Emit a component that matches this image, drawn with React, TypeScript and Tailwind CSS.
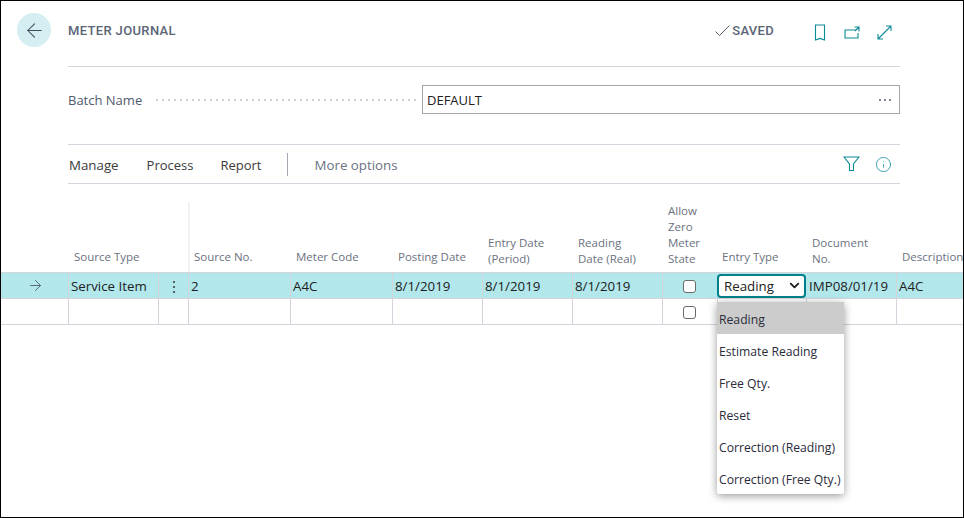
import { ArrowLeft, ArrowRight, ChevronDown, Info } from 'lucide-react';

const COLS = 'grid grid-cols-[67px_90px_30px_102px_102px_90px_90px_90px_55px_89px_90px_68px]';

const HEADERS = [
  { label: '', cls: '' },
  { label: 'Source Type', cls: 'pl-[6px] pb-[7px]' },
  { label: '', cls: '' },
  { label: 'Source No.', cls: 'pl-[4px] pb-[7px] border-l-2 border-[#f1f1f3]' },
  { label: 'Meter Code', cls: 'pl-[6px] pb-[7px]' },
  { label: 'Posting Date', cls: 'pl-[6px] pb-[7px]' },
  { label: 'Entry Date (Period)', cls: 'pl-[6px] pb-[5px] pr-[20px]' },
  { label: 'Reading Date (Real)', cls: 'pl-[6px] pb-[5px] pr-[20px]' },
  { label: 'Allow Zero Meter State', cls: 'pl-[6px] pb-[5px]' },
  { label: 'Entry Type', cls: 'pl-[5px] pb-[7px]' },
  { label: 'Document No.', cls: 'pl-[6px] pb-[5px] pr-[20px]' },
  { label: 'Description', cls: 'pl-[6px] pb-[7px] whitespace-nowrap' },
];

const OPTIONS = ['Reading', 'Estimate Reading', 'Free Qty.', 'Reset', 'Correction (Reading)', 'Correction (Free Qty.)'];

const cell = 'border-l border-[#d4d4dc] pl-[2px] pt-[2px] flex items-center overflow-hidden whitespace-nowrap';

function Checkbox() {
  return <div className="w-[13px] h-[13px] rounded-[3px] border border-[#6b6b6b] bg-white" />;
}

export default function App() {
  return (
    <div className="relative w-[964px] h-[518px] bg-white border border-black overflow-hidden text-[13.3px] text-[#212121] font-['Open_Sans','Noto_Sans',sans-serif]">
      {/* Header */}
      <div className="flex h-[66px]">
        <div className="w-[67px] pl-[16px] pt-[12px]">
          <div className="w-[34px] h-[34px] rounded-full bg-[#d5eef1] flex items-center justify-center text-[#3f4a5a]">
            <ArrowLeft size={23} strokeWidth={1.1} />
          </div>
        </div>
        <div className="w-[832px] flex items-start border-b border-[#d4d4dc]">
          <div className="pt-[20px] text-[13px] font-['Roboto',sans-serif] font-medium tracking-[0.35px] text-[#5a6576]">METER JOURNAL</div>
          <div className="ml-auto flex items-center pt-[20px]">
            <svg width="15" height="12" viewBox="0 0 15 12" fill="none" stroke="#505c6d" strokeWidth="1"><path d="M0.500 6.500l4 4L14.500 0.500" /></svg>
            <span className="ml-[2px] text-[13px] font-['Roboto',sans-serif] font-medium tracking-[0.3px] text-[#5a6576]">SAVED</span>
            <svg className="ml-[40px] mt-[3px]" width="12" height="17" viewBox="0 0 12 17" fill="none" stroke="#0a8a96" strokeWidth="1.1"><path d="M1.500 1h9v15l-4.500-1.600L1.500 16z" /></svg>
            <svg className="ml-[18px] mt-[3px]" width="16" height="13" viewBox="0 0 16 13" fill="none" stroke="#0a8a96" strokeWidth="1.1"><path d="M11.500 4H1v8h13V7M10.500 1h4.500v4.500M15 1l-4 4" /></svg>
            <svg className="ml-[17px] mr-[8px] mt-[2px]" width="15" height="15" viewBox="0 0 15 15" fill="none" stroke="#0a8a96" strokeWidth="1.1"><path d="M9 1h5v5M14 1L1 14M1 9v5h5" /></svg>
          </div>
        </div>
      </div>

      {/* Batch */}
      <div className="flex items-center ml-[67px] w-[832px] mt-[18px] h-[29px]">
        <span className="text-[#505c6d] w-[86px] pt-[3px] text-[13px]">Batch Name</span>
        <div className="w-[264px] h-[2px] mt-[1px] bg-[radial-gradient(circle,#d0d0d0_1px,transparent_1px)] bg-[length:6px_2px]" />
        <div className="ml-[4px] flex-1 h-[29px] border border-[#a6a6a6] flex items-center justify-between pl-[4px] pr-[8px]">
          <span className="text-[13px] pt-[3px]">DEFAULT</span>
          <div className="flex gap-[3px] pt-[1px]">
            <span className="w-[2px] h-[2px] rounded-full bg-[#505c6d]" />
            <span className="w-[2px] h-[2px] rounded-full bg-[#505c6d]" />
            <span className="w-[2px] h-[2px] rounded-full bg-[#505c6d]" />
          </div>
        </div>
      </div>

      {/* Actions */}
      <div className="flex items-center ml-[67px] w-[832px] mt-[30px] h-[40px] border-y border-[#d4d4dc]">
        <span className="ml-[1px] pt-[4px] text-[#3b3b3b]">Manage</span>
        <span className="ml-[28px] pt-[4px] text-[13px] text-[#3b3b3b]">Process</span>
        <span className="ml-[27px] pt-[4px] text-[13px] text-[#3b3b3b]">Report</span>
        <div className="ml-[25px] w-px h-[23px] bg-[#a6a6b0]" />
        <span className="ml-[27px] pt-[4px] text-[#6b7280]">More options</span>
        <svg className="ml-auto" width="17" height="16" viewBox="0 0 17 16" fill="none" stroke="#0a8a96" strokeWidth="1.1"><path d="M1 1h15l-5.500 7v6.500h-4V8z" /></svg>
        <Info className="ml-[15px] mr-[8px] text-[#0a8a96]" size={17} strokeWidth={1.1} />
      </div>

      {/* Table head */}
      <div className={`${COLS} h-[70px] mt-[18px] w-[962px] text-[11.5px] leading-[16px] text-[#6b7280]`}>
        {HEADERS.map((h, i) => (
          <div key={i} className={`flex items-end ${h.cls}`}>
            <span>{h.label}</span>
          </div>
        ))}
      </div>

      {/* Selected row */}
      <div className={`${COLS} h-[26px] bg-[#b2e8ec] border-t border-[#d4d4dc] w-[962px]`}>
        <div className="flex items-center justify-center pl-[1px] text-[#3f4a5a]">
          <ArrowRight size={17} strokeWidth={1.1} />
        </div>
        <div className={cell}>Service Item</div>
        <div className={`${cell} justify-center pl-0 pr-[1px] pt-0`}>
          <div className="flex flex-col gap-[3px]">
            <span className="w-[2px] h-[2px] rounded-full bg-[#333]" />
            <span className="w-[2px] h-[2px] rounded-full bg-[#333]" />
            <span className="w-[2px] h-[2px] rounded-full bg-[#333]" />
          </div>
        </div>
        <div className={cell}>2</div>
        <div className={cell}>A4C</div>
        <div className={cell}>8/1/2019</div>
        <div className={cell}>8/1/2019</div>
        <div className={cell}>8/1/2019</div>
        <div className={`${cell} justify-center pl-0 pt-0 pr-[3px]`}><Checkbox /></div>
        <div className="relative flex items-center">
          <div className="w-[89px] h-[24px] rounded-[4px] border-2 border-[#00808a] bg-white flex items-center justify-between pl-[5px] pr-[2px]">
            <span className="pt-[2px]">Reading</span>
            <ChevronDown size={15} strokeWidth={3} />
          </div>
        </div>
        <div className="pl-[3px] pt-[2px] flex items-center whitespace-nowrap overflow-hidden">IMP08/01/19</div>
        <div className={cell}>A4C</div>
      </div>

      {/* Empty row */}
      <div className={`${COLS} h-[25px] border-t border-b border-[#d4d4dc] w-[962px] box-content`}>
        <div />
        <div className={cell} />
        <div className={cell} />
        <div className={cell} />
        <div className={cell} />
        <div className={cell} />
        <div className={cell} />
        <div className={cell} />
        <div className={`${cell} justify-center pl-0 pt-0 pr-[3px] pb-[1px]`}><Checkbox /></div>
        <div className={cell} />
        <div className={cell} />
        <div className={cell} />
      </div>

      {/* Entry type dropdown */}
      <div className="absolute left-[716px] top-[301px] w-[127px] rounded-[2px] bg-white shadow-[0_2px_8px_rgba(0,0,0,0.4)]">
        {OPTIONS.map((o, i) => (
          <div key={o} className={`h-[32px] pl-[2px] pt-[4px] flex items-center whitespace-nowrap text-[12.2px] text-[#2b2b3b] ${i === 0 ? 'bg-[#cccccc]' : ''}`}>
            {o}
          </div>
        ))}
      </div>
    </div>
  );
}
